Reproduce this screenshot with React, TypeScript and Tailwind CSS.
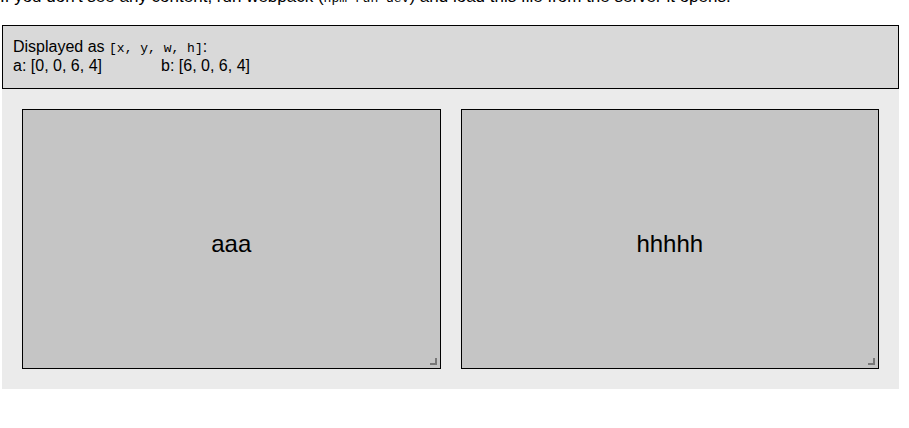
import React from "react";

const layout = [
  { i: "a", x: 0, y: 0, w: 6, h: 4, label: "aaa" },
  { i: "b", x: 6, y: 0, w: 6, h: 4, label: "hhhhh" },
];

const GridItem = ({ label }: { label: string }) => (
  <div className="relative h-[260px] w-[420px] border border-black bg-[#c5c5c5]">
    <div className="flex h-full items-center justify-center pt-[10px] text-[24px] leading-none">
      {label}
    </div>
    {/* resize handle */}
    <span className="absolute bottom-[3px] right-[3px] h-[7px] w-[7px] border-b-2 border-r-2 border-[#777]"></span>
  </div>
);

export default function App() {
  return (
    <div className="h-[428px] overflow-hidden bg-white font-['Liberation_Sans',Arial,sans-serif] text-black">
      <p className="mt-[-12px] whitespace-nowrap text-[17px] leading-[18px]">
        If you don't see any content, run webpack (
        <code className="font-['Liberation_Mono',monospace] text-[13px]">npm run dev</code>) and load this file
        from the server it opens.
      </p>

      <div className="ml-[2px] mt-[17px] w-[897px]">
        <div className="border border-black bg-[#d9d9d9] pb-[14px] pl-[10px] pt-[12px] text-[16px] leading-[17px]">
          <div>
            Displayed as{" "}
            <code className="font-['Liberation_Mono',monospace] text-[13px]">[x, y, w, h]</code>:
          </div>
          <div className="flex">
            {layout.map((l) => (
              <div key={l.i} className="w-[148px]">
                {l.i}: [{l.x}, {l.y}, {l.w}, {l.h}]
              </div>
            ))}
          </div>
        </div>

        <div className="flex h-[300px] gap-[20px] bg-[#ebebeb] p-[20px]">
          {layout.map((l) => (
            <GridItem key={l.i} label={l.label} />
          ))}
        </div>
      </div>
    </div>
  );
}
